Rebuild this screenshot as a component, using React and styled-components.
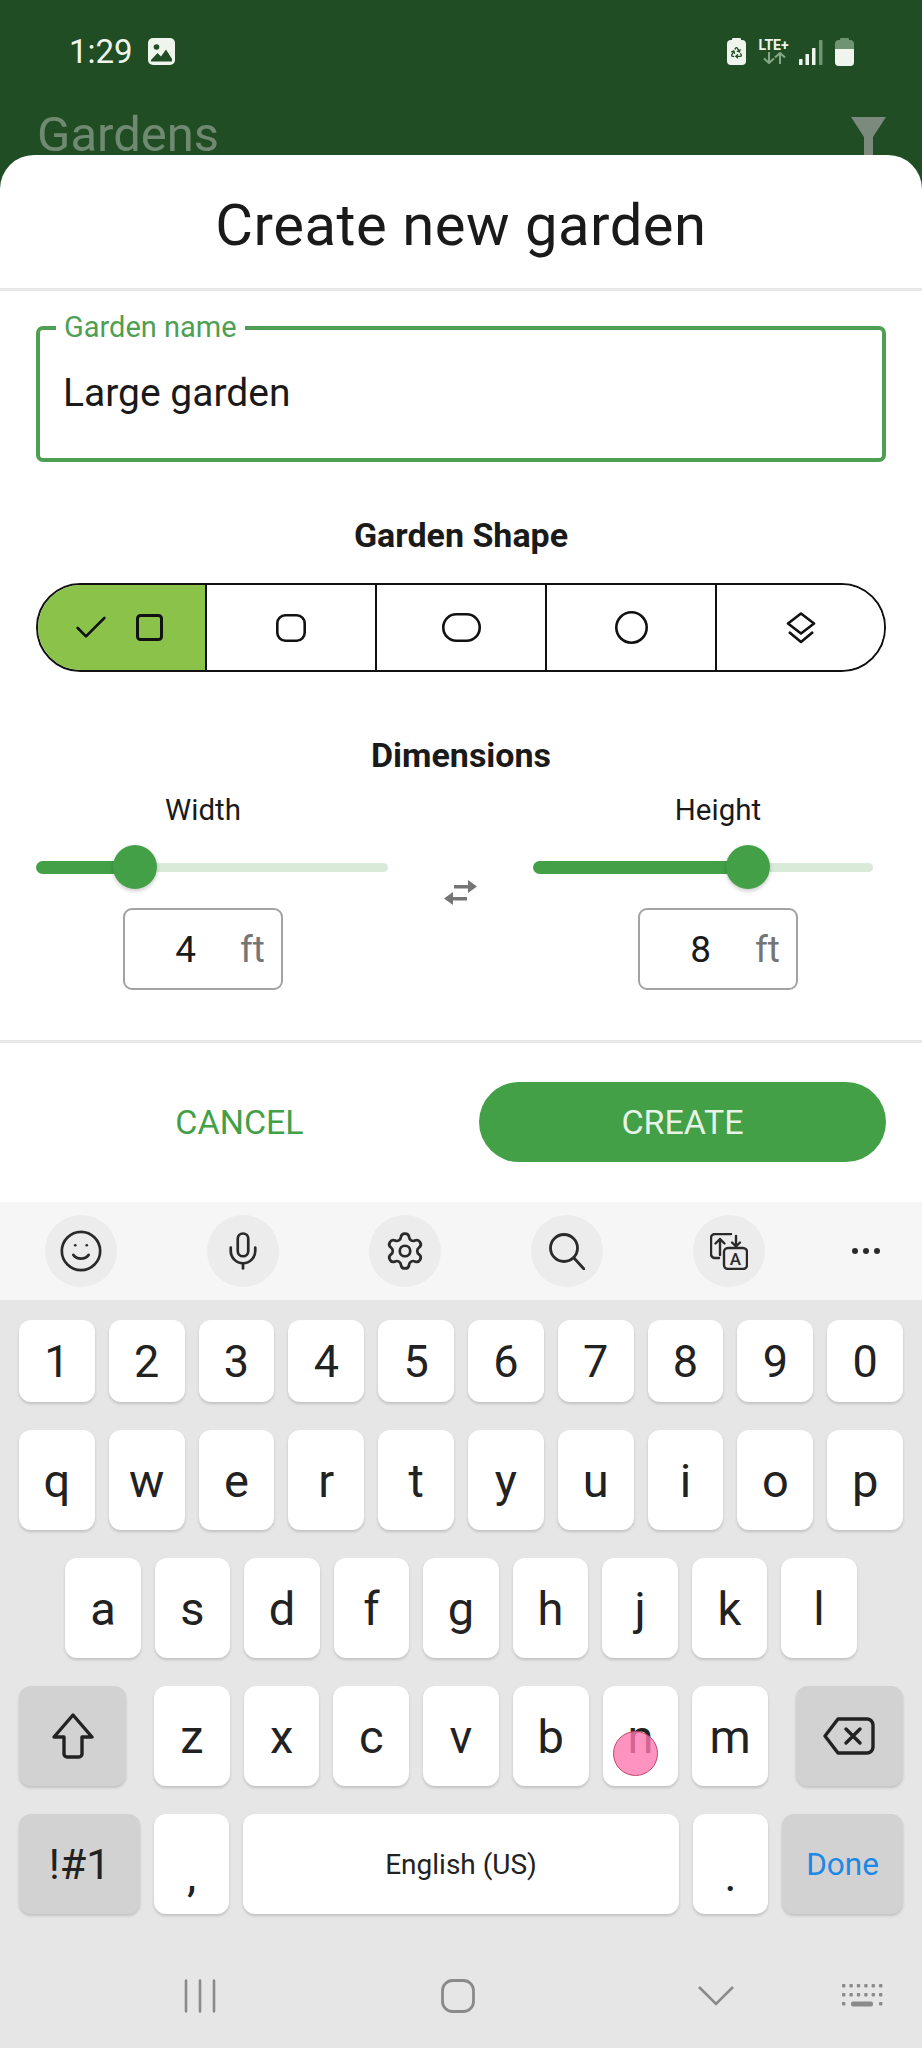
import React from 'react';
import styled, { createGlobalStyle } from 'styled-components';
import { Smile, Mic, Settings, Check, Recycle } from 'lucide-react';

const GlobalStyle = createGlobalStyle`
    html, body {
        margin: 0;
        padding: 0;
        background: #e6e6e6;
    }
    * {
        box-sizing: border-box;
    }
`;

const GREEN = '#43a047';

const Screen = styled.div`
    width: 922px;
    height: 2048px;
    overflow: hidden;
    display: flex;
    flex-direction: column;
    background: #214d24;
    font-family: Roboto, "Liberation Sans", sans-serif;
    color: #1a1a1a;
`;

const Header = styled.div`
    height: 155px;
    flex: none;
    overflow: hidden;
    display: flex;
    flex-direction: column;
`;

const StatusBar = styled.div`
    height: 70px;
    flex: none;
    padding: 38px 68px 0 69px;
    display: flex;
    justify-content: space-between;
    align-items: flex-start;
    color: #eff5ec;
`;

const StatusGroup = styled.div`
    display: flex;
    align-items: flex-start;
`;

const Time = styled.span`
    font-size: 33px;
    line-height: 28px;
    margin-right: 15px;
`;

const Network = styled.div`
    width: 33px;
    margin: 0 9px 0 11px;
    display: flex;
    flex-direction: column;
    align-items: center;
    font-size: 14px;
    font-weight: 700;
    line-height: 14px;
`;

const SignalWrap = styled.div`
    margin: 2px 12px 0 0;
`;

const AppBar = styled.div`
    margin-top: 47px;
    padding: 0 36px 0 37px;
    display: flex;
    justify-content: space-between;
    align-items: flex-start;
`;

const AppTitle = styled.div`
    font-size: 49px;
    line-height: 36px;
    color: #6f8a70;
`;

const Sheet = styled.div`
    height: 1047px;
    flex: none;
    background: #fff;
    border-radius: 34px 34px 0 0;
    display: flex;
    flex-direction: column;
`;

const TitleBar = styled.div`
    height: 136px;
    flex: none;
    padding-top: 6px;
    display: flex;
    align-items: center;
    justify-content: center;
    border-bottom: 3px solid #e8e8e8;
    font-size: 58px;
    letter-spacing: 0.5px;
`;

const Form = styled.div`
    padding: 0 36px;
`;

const Field = styled.div`
    position: relative;
    height: 136px;
    margin-top: 35px;
    padding: 0 23px 2px;
    display: flex;
    align-items: center;
    border: 4px solid #4f9f53;
    border-radius: 7px;
    font-size: 39px;
`;

const FieldLabel = styled.span`
    position: absolute;
    top: -17px;
    left: 16px;
    padding: 0 8px 0 8px;
    background: #fff;
    color: #4f9f53;
    font-size: 29px;
    line-height: 28px;
`;

const SectionTitle = styled.div`
    margin-top: ${({$top}) => $top}px;
    height: 40px;
    line-height: 40px;
    text-align: center;
    font-size: 34px;
    font-weight: 700;
`;

const Segments = styled.div`
    margin-top: 28px;
    height: 89px;
    display: grid;
    grid-template-columns: 169px 170px 170px 170px 1fr;
    border: 2.5px solid #111;
    border-radius: 45px;
    overflow: hidden;
`;

const Segment = styled.div`
    display: flex;
    align-items: center;
    justify-content: center;
    gap: 25px;
    padding-right: ${({$selected}) => $selected ? 9 : 0}px;
    background: ${({$selected}) => $selected ? '#8bc34a' : '#fff'};
    border-right: ${({$last}) => $last ? 'none' : '2px solid #111'};
`;

const DimRow = styled.div`
    margin-top: 17px;
    padding-right: 13px;
    display: grid;
    grid-template-columns: 352px 1fr 340px;
`;

const DimColumn = styled.div`
    display: flex;
    flex-direction: column;
    align-items: center;
`;

const DimLabel = styled.div`
    height: 36px;
    line-height: 36px;
    font-size: 29.5px;
    margin-left: ${({$shift}) => $shift}px;
`;

const Slider = styled.div`
    width: 100%;
    height: 44px;
    margin-top: 17px;
    display: flex;
    align-items: center;
`;

const TrackFill = styled.div`
    flex: none;
    width: ${({$fill}) => $fill + 4}px;
    height: 13px;
    margin-right: -4px;
    background: ${GREEN};
    border-radius: 7px 0 0 7px;
`;

const Thumb = styled.div`
    position: relative;
    flex: none;
    width: 44px;
    height: 44px;
    border-radius: 50%;
    background: ${GREEN};
    box-shadow: 0 2px 4px rgba(0, 0, 0, 0.22);
`;

const TrackRest = styled.div`
    flex: 1;
    height: 9px;
    background: #d9ead9;
    border-radius: 0 5px 5px 0;
`;

const SwapSlot = styled.div`
    padding-top: 88px;
    display: flex;
    justify-content: center;
`;

const NumberBox = styled.div`
    width: 160px;
    height: 82px;
    margin-top: 19px;
    margin-left: ${({$shift}) => $shift}px;
    display: grid;
    grid-template-columns: 71px 1fr;
    align-items: center;
    border: 2px solid #a3a3a3;
    border-radius: 9px;
    font-size: 37px;
`;

const NumberValue = styled.span`
    text-align: right;
`;

const Unit = styled.span`
    padding-left: 44px;
    color: #757575;
`;

const Footer = styled.div`
    margin-top: 50px;
    padding: 39px 36px 0 0;
    display: flex;
    align-items: center;
    border-top: 3px solid #e8e8e8;
`;

const CancelButton = styled.div`
    flex: 1;
    text-align: center;
    color: ${GREEN};
    font-size: 34px;
`;

const CreateButton = styled.div`
    width: 407px;
    height: 80px;
    display: flex;
    align-items: center;
    justify-content: center;
    background: ${GREEN};
    border-radius: 40px;
    color: #e6f3e6;
    font-size: 34px;
`;

const Toolbar = styled.div`
    height: 98px;
    flex: none;
    display: grid;
    grid-template-columns: repeat(5, 162px) 1fr;
    align-items: center;
    justify-items: center;
    background: #f6f6f6;
`;

const ToolButton = styled.div`
    width: 72px;
    height: 72px;
    display: flex;
    align-items: center;
    justify-content: center;
    border-radius: 50%;
    background: #ececec;
    color: #2a2a2a;
`;

const MoreDots = styled.div`
    display: flex;
    gap: 5px;
`;

const Dot = styled.i`
    width: 6px;
    height: 6px;
    border-radius: 50%;
    background: #2a2a2a;
`;

const Keyboard = styled.div`
    position: relative;
    flex: 1;
    padding: 20px 19px 0;
    display: flex;
    flex-direction: column;
    gap: 28px;
    background: #e6e6e6;
`;

const KeyRow = styled.div`
    height: ${({$height}) => $height}px;
    display: flex;
    justify-content: center;
    gap: 14px;
`;

const Key = styled.div`
    flex: ${({$width}) => $width ? `0 0 ${$width}px` : '1 1 0'};
    display: flex;
    align-items: center;
    justify-content: center;
    padding-top: ${({$drop}) => $drop || 0}px;
    margin-right: ${({$after}) => $after || 0}px;
    margin-left: ${({$before}) => $before || 0}px;
    background: ${({$func}) => $func ? '#d2d2d2' : '#fff'};
    border-radius: 12px;
    box-shadow: 0 2px 3px rgba(0, 0, 0, 0.16);
    color: ${({$accent}) => $accent ? '#1e88e5' : '#222'};
    font-size: ${({$size}) => $size || 47}px;
`;

const NavBar = styled.div`
    position: absolute;
    left: 0;
    right: 0;
    bottom: 0;
    height: 104px;
    display: grid;
    grid-template-columns: 184px 32px 225px 34px 223px 36px 108px 41px;
    align-items: center;
`;

const NavCell = styled.div`
    grid-column: ${({$col}) => $col};
    display: flex;
`;

const TouchDot = styled.div`
    position: absolute;
    left: 613px;
    top: 431px;
    width: 45px;
    height: 45px;
    border-radius: 50%;
    border: 1px solid #c4476f;
    background: rgba(255, 120, 175, 0.8);
`;

const ImageIcon = () => (
    <svg width="27" height="27" viewBox="0 0 27 27">
        <rect width="27" height="27" rx="5" fill="#eff5ec" />
        <circle cx="8.5" cy="9" r="2.8" fill="#214d24" />
        <path d="M3 22 L9.5 15 L13 18.5 L18 11.5 L24 21 V23.5 H3 Z" fill="#214d24" />
    </svg>
);

const RecycleBattery = () => (
    <svg width="19" height="27" viewBox="0 0 19 27">
        <rect x="5" width="9" height="4" rx="1" fill="#eff5ec" />
        <rect y="2" width="19" height="25" rx="4" fill="#eff5ec" />
        <Recycle x="3" y="8" size={13} color="#214d24" strokeWidth={2.4} />
    </svg>
);

const NetArrows = () => (
    <svg width="26" height="12" viewBox="0 0 26 12" fill="none" stroke="#86a688" strokeWidth="2">
        <path d="M8 0 V11 M3 6.5 L8 11 L13 6.5" />
        <path d="M19 12 V1 M14 5.5 L19 1 L24 5.5" />
    </svg>
);

const Signal = () => (
    <svg width="24" height="25" viewBox="0 0 24 25" fill="#eff5ec">
        <rect x="0" y="19" width="3.5" height="6" rx="0.6" />
        <rect x="6.5" y="14" width="3.5" height="11" rx="0.6" />
        <rect x="13" y="8" width="3.5" height="17" rx="0.6" />
        <rect x="20" y="0" width="3.5" height="25" rx="0.6" fill="#6f9472" />
    </svg>
);

const Battery = () => (
    <svg width="19" height="28" viewBox="0 0 19 28">
        <rect x="5" width="9" height="4" rx="1" fill="#6f9472" />
        <rect y="2" width="19" height="26" rx="4" fill="#6f9472" />
        <path d="M0 11 H19 V24 a4 4 0 0 1 -4 4 H4 a4 4 0 0 1 -4 -4 Z" fill="#eff5ec" />
    </svg>
);

const FunnelIcon = () => (
    <svg width="35" height="40" viewBox="0 0 35 40" fill="#7b8a7c">
        <path d="M0 0 H35 L22 20 V40 H13 V20 Z" />
    </svg>
);

const ShapeIcon = ({width, height, radius, stroke = 2.6}) => (
    <svg width={width} height={height} viewBox={`0 0 ${width} ${height}`} fill="none" stroke="#111" strokeWidth={stroke}>
        <rect x={stroke / 2} y={stroke / 2} width={width - stroke} height={height - stroke} rx={radius} />
    </svg>
);

const LayersIcon = () => (
    <svg width="30" height="32" viewBox="0 0 30 32" fill="none" stroke="#111" strokeWidth="2.6" strokeLinejoin="round">
        <path d="M15 1.5 L28 11.5 L15 21.5 L2 11.5 Z" />
        <path d="M3 20 L15 30 L27 20" />
    </svg>
);

const SwapIcon = () => (
    <svg width="33" height="25" viewBox="0 0 33 25" fill="#757575">
        <path d="M33 6.5 L24 0 V5 H10 V8.5 H24 V13 Z" />
        <path d="M0 18.5 L9 12 V17 H23 V20.5 H9 V25 Z" />
    </svg>
);

const SearchIcon = () => (
    <svg width="36" height="37" viewBox="0 0 36 37" fill="none" stroke="#2a2a2a" strokeWidth="2.8" strokeLinecap="round">
        <circle cx="15" cy="15" r="13.5" />
        <path d="M25 25 L35 36" />
    </svg>
);

const TranslateIcon = () => (
    <svg width="38" height="37" viewBox="0 0 38 37" fill="none" stroke="#2a2a2a" strokeWidth="2.4" strokeLinecap="round" strokeLinejoin="round">
        <path d="M9 25 H5 a4 4 0 0 1 -4 -4 V5 a4 4 0 0 1 4 -4 H21" />
        <path d="M10 22 V6 M5.5 10.5 L10 6 L14.5 10.5" />
        <path d="M26 3 V13 M22 9.5 L26 13.5 L30 9.5" />
        <rect x="14" y="15" width="23" height="21" rx="4" />
        <text x="25.5" y="32" textAnchor="middle" fontSize="17" fontWeight="500" fontFamily="Roboto" fill="#2a2a2a" stroke="none">A</text>
    </svg>
);

const ShiftIcon = () => (
    <svg width="44" height="46" viewBox="0 0 44 46" fill="none" stroke="#222" strokeWidth="3.4" strokeLinejoin="round">
        <path d="M22 2 L41 24 H31 V41 a3 3 0 0 1 -3 3 H16 a3 3 0 0 1 -3 -3 V24 H3 Z" />
    </svg>
);

const BackspaceIcon = () => (
    <svg width="52" height="38" viewBox="0 0 52 38" fill="none" stroke="#222" strokeWidth="3.4" strokeLinejoin="round" strokeLinecap="round">
        <path d="M15 2 H44 a6 6 0 0 1 6 6 V30 a6 6 0 0 1 -6 6 H15 L2 19 Z" />
        <path d="M23 12 L37 26 M37 12 L23 26" />
    </svg>
);

const RecentsIcon = () => (
    <svg width="32" height="34" viewBox="0 0 32 34" stroke="#8a8a8a" strokeWidth="2.6" strokeLinecap="round">
        <path d="M2 1.5 V32.5 M16 1.5 V32.5 M30 1.5 V32.5" />
    </svg>
);

const HomeIcon = () => (
    <svg width="34" height="34" viewBox="0 0 34 34" fill="none" stroke="#8a8a8a" strokeWidth="2.8">
        <rect x="1.5" y="1.5" width="31" height="31" rx="10" />
    </svg>
);

const ChevronIcon = () => (
    <svg width="36" height="20" viewBox="0 0 36 20" fill="none" stroke="#8a8a8a" strokeWidth="2.6">
        <path d="M1 1 L18 18 L35 1" />
    </svg>
);

const KeyboardIcon = () => (
    <svg width="41" height="24" viewBox="0 0 41 24" fill="#8a8a8a">
        {[0, 1, 2, 3, 4, 5].map((i) => <rect key={'a' + i} x={i * 7.4} y="0" width="3.4" height="3.4" rx="1" />)}
        {[0, 1, 2, 3, 4, 5].map((i) => <rect key={'b' + i} x={i * 7.4} y="9" width="3.4" height="3.4" rx="1" />)}
        <rect x="0" y="18" width="3.4" height="3.4" rx="1" />
        <rect x="9" y="17.5" width="22" height="5" rx="2" />
        <rect x="37" y="18" width="3.4" height="3.4" rx="1" />
    </svg>
);

const RowKeys = ({keys, width, size}) => keys.split('').map((k) => <Key key={k} $width={width} $size={size}>{k}</Key>);

const DimensionControl = ({label, fill, value, shift}) => (
    <DimColumn>
        <DimLabel $shift={shift}>{label}</DimLabel>
        <Slider>
            <TrackFill $fill={fill} />
            <Thumb />
            <TrackRest />
        </Slider>
        <NumberBox $shift={shift}>
            <NumberValue>{value}</NumberValue>
            <Unit>ft</Unit>
        </NumberBox>
    </DimColumn>
);

const App = () => (
    <Screen>
        <GlobalStyle />
        <Header>
            <StatusBar>
                <StatusGroup>
                    <Time>1:29</Time>
                    <ImageIcon />
                </StatusGroup>
                <StatusGroup>
                    <RecycleBattery />
                    <Network>
                        LTE+
                        <NetArrows />
                    </Network>
                    <SignalWrap><Signal /></SignalWrap>
                    <Battery />
                </StatusGroup>
            </StatusBar>
            <AppBar>
                <AppTitle>Gardens</AppTitle>
                <FunnelIcon />
            </AppBar>
        </Header>
        <Sheet>
            <TitleBar>Create new garden</TitleBar>
            <Form>
                <Field>
                    <FieldLabel>Garden name</FieldLabel>
                    Large garden
                </Field>
                <SectionTitle $top={53}>Garden Shape</SectionTitle>
                <Segments>
                    <Segment $selected>
                        <Check size={40} color="#111" strokeWidth={1.6} />
                        <ShapeIcon width={27} height={27} radius={3} stroke={3} />
                    </Segment>
                    <Segment><ShapeIcon width={30} height={28} radius={8} /></Segment>
                    <Segment><ShapeIcon width={39} height={29} radius={13} /></Segment>
                    <Segment><ShapeIcon width={33} height={33} radius={16.5} /></Segment>
                    <Segment $last><LayersIcon /></Segment>
                </Segments>
                <SectionTitle $top={63}>Dimensions</SectionTitle>
                <DimRow>
                    <DimensionControl label="Width" fill={77} value="4" shift={-18} />
                    <SwapSlot><SwapIcon /></SwapSlot>
                    <DimensionControl label="Height" fill={193} value="8" shift={30} />
                </DimRow>
            </Form>
            <Footer>
                <CancelButton>CANCEL</CancelButton>
                <CreateButton>CREATE</CreateButton>
            </Footer>
        </Sheet>
        <Toolbar>
            <ToolButton><Smile size={46} strokeWidth={1.4} /></ToolButton>
            <ToolButton><Mic size={42} strokeWidth={1.55} /></ToolButton>
            <ToolButton><Settings size={42} strokeWidth={1.55} /></ToolButton>
            <ToolButton><SearchIcon /></ToolButton>
            <ToolButton><TranslateIcon /></ToolButton>
            <MoreDots><Dot /><Dot /><Dot /></MoreDots>
        </Toolbar>
        <Keyboard>
            <KeyRow $height={82}><RowKeys keys="1234567890" size={45} /></KeyRow>
            <KeyRow $height={100}><RowKeys keys="qwertyuiop" /></KeyRow>
            <KeyRow $height={100}><RowKeys keys="asdfghjkl" width={75.5} /></KeyRow>
            <KeyRow $height={100}>
                <Key $func $width={107} $after={14}><ShiftIcon /></Key>
                <RowKeys keys="zxcvbnm" width={75.7} />
                <Key $func $width={107} $before={14}><BackspaceIcon /></Key>
            </KeyRow>
            <KeyRow $height={100}>
                <Key $func $width={121} $size={43}>!#1</Key>
                <Key $width={75} $drop={20}>,</Key>
                <Key $size={28}>English (US)</Key>
                <Key $width={75} $drop={20}>.</Key>
                <Key $func $accent $width={121} $size={31.5}>Done</Key>
            </KeyRow>
            <TouchDot />
            <NavBar>
                <NavCell $col={2}><RecentsIcon /></NavCell>
                <NavCell $col={4}><HomeIcon /></NavCell>
                <NavCell $col={6}><ChevronIcon /></NavCell>
                <NavCell $col={8}><KeyboardIcon /></NavCell>
            </NavBar>
        </Keyboard>
    </Screen>
);

export default App;
